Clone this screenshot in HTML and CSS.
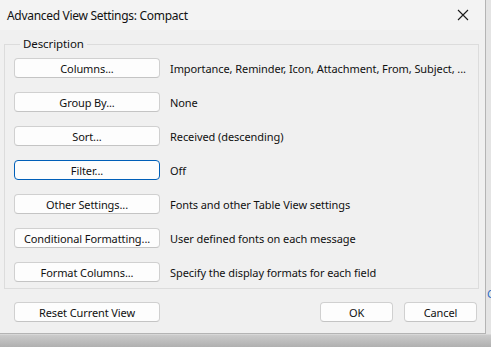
FILE: index.html
```html
<!DOCTYPE html>
<html>
<head>
<meta charset="UTF-8">
<title>Advanced View Settings: Compact</title>
<link rel="stylesheet" href="styles.css">
</head>
<body>

<div class="dialog">
    <div class="title-bar">
        <span class="title">Advanced View Settings: Compact</span>
        <span class="close">
            <svg width="12" height="12" viewBox="0 0 12 12"><path d="M1 1L11 11M11 1L1 11" stroke="#1a1a1a" stroke-width="1.1" fill="none"/></svg>
        </span>
    </div>

    <fieldset class="group">
        <legend>Description</legend>
        <div class="row">
            <button class="btn">Columns...</button>
            <span class="desc">Importance, Reminder, Icon, Attachment, From, Subject, ...</span>
        </div>
        <div class="row">
            <button class="btn">Group By...</button>
            <span class="desc">None</span>
        </div>
        <div class="row">
            <button class="btn">Sort...</button>
            <span class="desc">Received (descending)</span>
        </div>
        <div class="row">
            <button class="btn focus">Filter...</button>
            <span class="desc">Off</span>
        </div>
        <div class="row">
            <button class="btn">Other Settings...</button>
            <span class="desc">Fonts and other Table View settings</span>
        </div>
        <div class="row">
            <button class="btn">Conditional Formatting...</button>
            <span class="desc">User defined fonts on each message</span>
        </div>
        <div class="row">
            <button class="btn">Format Columns...</button>
            <span class="desc">Specify the display formats for each field</span>
        </div>
    </fieldset>

    <div class="footer">
        <button class="btn">Reset Current View</button>
        <div class="actions">
            <button class="btn small">OK</button>
            <button class="btn small">Cancel</button>
        </div>
    </div>
</div>

<span class="peek">C</span>

</body>
</html>
```

FILE: styles.css
```css
* {
    margin: 0;
    padding: 0;
    box-sizing: border-box;
}

html, body {
    height: 100%;
}

body {
    position: relative;
    overflow: hidden;
    font-family: "Noto Sans", "Liberation Sans", sans-serif;
    font-size: 11px;
    color: #111;
    background: linear-gradient(to bottom, #e4e4e4 0, #e4e4e4 334px, #cbcbcb 335px, #b0b0b0 100%);
}

.dialog {
    display: flex;
    flex-direction: column;
    width: 486px;
    height: 334px;
    background: #f0f0f0;
    border-right: 1px solid #b4b4b4;
    border-bottom: 1px solid #b4b4b4;
}

.title-bar {
    display: flex;
    align-items: center;
    justify-content: space-between;
    height: 30px;
    padding: 0 16px 0 7px;
    background: #f3f3f3;
}

.title {
    font-size: 12px;
    letter-spacing: -0.3px;
}

.close {
    display: flex;
    align-items: center;
}

.group {
    margin: 6px 6px 0 4px;
    padding: 6px 0 6px 9px;
    border: 1px solid #dcdcdc;
    display: flex;
    flex-direction: column;
    gap: 14px;
}

.group legend {
    margin-left: 6px;
    padding: 0 3px;
    font-size: 11.5px;
    line-height: 16px;
    letter-spacing: -0.1px;
}

.row {
    display: flex;
    align-items: center;
    gap: 10px;
    height: 20px;
}

.btn {
    width: 146px;
    height: 20px;
    font-family: inherit;
    font-size: 11px;
    letter-spacing: -0.1px;
    color: #111;
    background: #fdfdfd;
    border: 1px solid #d0d0d0;
    border-bottom-color: #c4c4c4;
    border-radius: 4px;
}

.btn.focus {
    border-color: #005fb8;
}

.btn.small {
    width: 73px;
}

.desc {
    letter-spacing: -0.08px;
    white-space: nowrap;
}

.footer {
    display: flex;
    justify-content: space-between;
    margin-top: 13px;
    padding: 0 8px 0 14px;
}

.actions {
    display: flex;
    gap: 11px;
}

.peek {
    position: absolute;
    left: 487px;
    top: 286px;
    color: #2b6cc4;
    font-size: 11px;
}
```
